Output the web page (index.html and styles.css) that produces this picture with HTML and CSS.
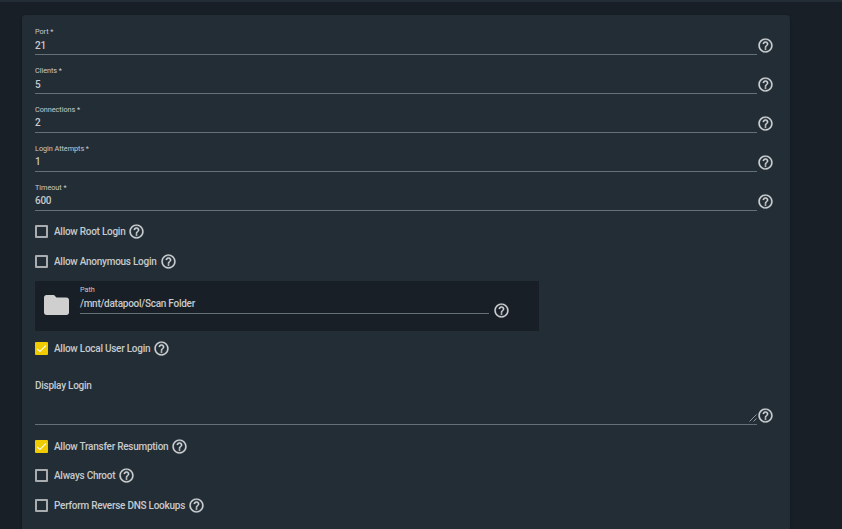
FILE: index.html
```html
<!DOCTYPE html>
<html lang="en">
<head>
    <meta charset="UTF-8">
    <meta name="viewport" content="width=device-width, initial-scale=1.0">
    <title>FTP</title>
    <link rel="stylesheet" href="styles.css">
</head>
<body>
    <svg class="defs" width="0" height="0">
        <symbol id="help" viewBox="0 0 24 24">
            <path d="M11 18h2v-2h-2v2zm1-16C6.48 2 2 6.48 2 12s4.48 10 10 10 10-4.48 10-10S17.52 2 12 2zm0 18c-4.41 0-8-3.59-8-8s3.59-8 8-8 8 3.59 8 8-3.59 8-8 8zm0-14c-2.21 0-4 1.79-4 4h2c0-1.1.9-2 2-2s2 .9 2 2c0 2-3 1.75-3 5h2c0-2.25 3-2.5 3-5 0-2.21-1.79-4-4-4z"/>
        </symbol>
        <symbol id="check" viewBox="0 0 24 24">
            <path d="M4.1 12.7 9 17.6 20.3 6.3" fill="none" stroke="#fff" stroke-width="2"/>
        </symbol>
    </svg>
    <div class="topbar"></div>
    <form class="card">
        <div class="field">
            <div class="input"><label>Port *</label><span class="value">21</span></div>
            <svg class="help"><use href="#help"/></svg>
        </div>
        <div class="field">
            <div class="input"><label>Clients *</label><span class="value">5</span></div>
            <svg class="help"><use href="#help"/></svg>
        </div>
        <div class="field">
            <div class="input"><label>Connections *</label><span class="value">2</span></div>
            <svg class="help"><use href="#help"/></svg>
        </div>
        <div class="field">
            <div class="input"><label>Login Attempts *</label><span class="value">1</span></div>
            <svg class="help"><use href="#help"/></svg>
        </div>
        <div class="field">
            <div class="input"><label>Timeout *</label><span class="value">600</span></div>
            <svg class="help"><use href="#help"/></svg>
        </div>

        <div class="option first">
            <span class="box"></span><span class="text">Allow Root Login</span>
            <svg class="help"><use href="#help"/></svg>
        </div>
        <div class="option">
            <span class="box"></span><span class="text">Allow Anonymous Login</span>
            <svg class="help"><use href="#help"/></svg>
        </div>

        <div class="explorer">
            <svg class="folder" viewBox="0 0 24 24">
                <path d="M10 4H4c-1.100 0-1.990.900-1.990 2L2 18c0 1.100.900 2 2 2h16c1.100 0 2-.900 2-2V8c0-1.100-.900-2-2-2h-8l-2-2z"/>
            </svg>
            <div class="path"><label>Path</label><span class="value">/mnt/datapool/Scan Folder</span></div>
            <svg class="help"><use href="#help"/></svg>
        </div>

        <div class="option local">
            <span class="box checked"><svg><use href="#check"/></svg></span><span class="text">Allow Local User Login</span>
            <svg class="help"><use href="#help"/></svg>
        </div>

        <div class="field display">
            <div class="input">
                <span class="text">Display Login</span>
                <svg class="grip" viewBox="0 0 8 8"><path d="M.5 7.500 7.500.500M4.500 7.500l3-3"/></svg>
            </div>
            <svg class="help"><use href="#help"/></svg>
        </div>

        <div class="option transfer">
            <span class="box checked"><svg><use href="#check"/></svg></span><span class="text">Allow Transfer Resumption</span>
            <svg class="help"><use href="#help"/></svg>
        </div>
        <div class="option chroot">
            <span class="box"></span><span class="text">Always Chroot</span>
            <svg class="help"><use href="#help"/></svg>
        </div>
        <div class="option">
            <span class="box"></span><span class="text">Perform Reverse DNS Lookups</span>
            <svg class="help"><use href="#help"/></svg>
        </div>
    </form>
</body>
</html>
```
FILE: styles.css
```css
* {
    box-sizing: border-box;
}
body {
    margin: 0;
    height: 529px;
    overflow: hidden;
    background-color: #181f27;
    color: #c6cacd;
    font-family: Roboto, sans-serif;
    font-size: 10px;
    font-weight: 500;
    letter-spacing: -0.26px;
}
.defs {
    display: block;
}
.topbar {
    height: 2px;
    background-color: #232d35;
}
.card {
    width: 768px;
    height: 540px;
    margin: 13px 0 0 22px;
    padding: 1px 13px 0;
    border-radius: 4px;
    background-color: #232d35;
    box-shadow: 0 1px 3px rgba(0, 0, 0, 0.3);
}
.help {
    flex: none;
    width: 17px;
    height: 17px;
    fill: #cfd3d6;
    stroke: #cfd3d6;
    stroke-width: 0.3;
}
.field {
    display: flex;
    height: 39px;
}
.field .help {
    margin-top: 21px;
}
.input {
    display: flex;
    flex-direction: column;
    width: 722px;
    border-bottom: 1px solid #667077;
}
label {
    display: block;
    height: 10px;
    font-size: 7.3px;
    font-weight: 400;
    line-height: 10px;
    letter-spacing: -0.05px;
}
.input label {
    margin-top: 11px;
}
.value {
    font-size: 10px;
    line-height: 12px;
}
.input .value {
    margin-top: 2px;
}
.field:nth-child(-n+2) .value {
    margin-top: 3px;
}
.option {
    display: flex;
    align-items: center;
    height: 30px;
}
.option.first {
    margin-top: 5px;
}
.box {
    width: 13px;
    height: 13px;
    margin-right: 6px;
    border: 2px solid #a9adb0;
    border-radius: 1px;
}
.box.checked {
    border: 0;
    background-color: #f0cb00;
}
.box svg {
    display: block;
    width: 13px;
    height: 13px;
}
.option .help {
    margin-left: 3px;
}
.explorer {
    display: flex;
    width: 504px;
    height: 50px;
    margin-top: 5px;
    padding-left: 6px;
    background-color: #181f27;
}
.folder {
    width: 31px;
    height: 30px;
    margin: 9px 8px 0 0;
    fill: #cfcfcf;
}
.path {
    display: flex;
    flex-direction: column;
    width: 409px;
    height: 33px;
    padding-top: 4px;
    border-bottom: 1px solid #667077;
}
.path .value {
    margin-top: 3px;
}
.explorer .help {
    margin: 21px 0 0 4px;
}
.option.local {
    margin-top: 2px;
}
.field.display {
    height: 62px;
}
.display .input {
    justify-content: space-between;
    padding-top: 17px;
}
.display .text {
    line-height: 12px;
}
.display .help {
    margin-top: 44px;
}
.grip {
    align-self: flex-end;
    width: 8px;
    height: 8px;
    margin-bottom: 2px;
    fill: none;
    stroke: #aeb3b6;
    stroke-width: 0.8;
}
.option.transfer {
    margin-top: 6px;
}
.option.chroot {
    height: 29px;
}
```
